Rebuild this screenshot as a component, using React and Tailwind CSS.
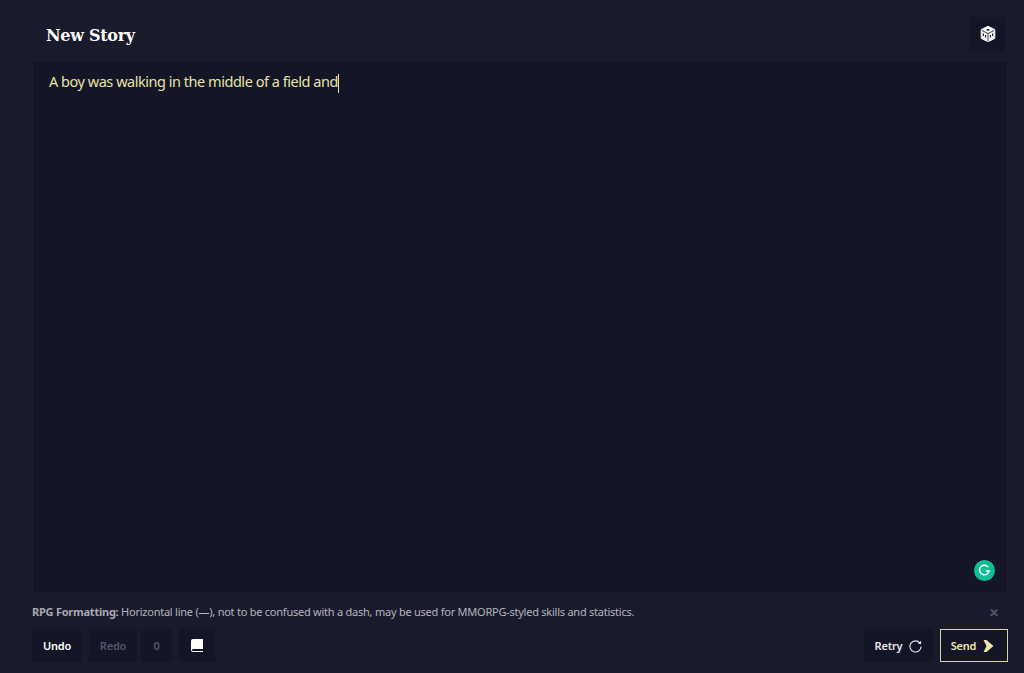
const sans = "font-['Noto_Sans',sans-serif]";

function DiceIcon() {
  return (
    <svg viewBox="0 0 16 16" className="w-[16px] h-[16px]">
      <path d="M8 .3l6.800 3.300v8.800L8 15.700l-6.800-3.300V3.600z" fill="#f4f4f6" stroke="#f4f4f6" strokeWidth="1" strokeLinejoin="round" />
      <path d="M2 4.500l6 3 6-3M8 7.500V15.500" stroke="#141526" strokeWidth=".8" fill="none" />
      <ellipse cx="8" cy="3.800" rx="1.600" ry=".9" fill="#141526" />
      <path d="M3.400 7.500v2.600M5.600 9v2.600M10.400 9v2.600M12.600 7.500v2.600" stroke="#141526" strokeWidth="1.100" />
    </svg>
  );
}

function BookIcon() {
  return (
    <svg viewBox="0 0 12 13" className="w-[12px] h-[13px]">
      <path d="M2 0h10v10H2a1 1 0 0 0-1 1v.2a1 1 0 0 0 1 .8h10v1H2a2 2 0 0 1-2-2V2a2 2 0 0 1 2-2z" fill="#ffffff" />
    </svg>
  );
}

function RetryIcon() {
  return (
    <svg viewBox="0 0 14 14" fill="none" className="w-[13px] h-[13px]">
      <path d="M11.800 3.300A6 6 0 1 0 13 7" stroke="#e8e8ec" strokeWidth="1.200" />
      <path d="M13 .8v3.400H9.600z" fill="#e8e8ec" />
    </svg>
  );
}

function SendIcon() {
  return (
    <svg viewBox="0 0 10 12" className="w-[11px] h-[12px]">
      <path d="M0 0h3l7 6-7 6H0l3-6z" fill="#ece6ac" />
    </svg>
  );
}

function GrammarlyBadge() {
  return (
    <div className="absolute right-[12px] bottom-[12px] w-[21px] h-[21px] rounded-full bg-[#0fbf92] flex items-center justify-center">
      <svg viewBox="0 0 14 14" fill="none" className="w-[13px] h-[13px]">
        <path d="M11 3.300A5.200 5.200 0 1 0 12 7.500H8.500" stroke="#ffffff" strokeWidth="1.500" />
      </svg>
    </div>
  );
}

const btn = "h-[33px] flex items-center justify-center bg-[#141526] text-[11px] font-semibold tracking-[-0.2px]";

export default function App() {
  return (
    <div className={`h-[673px] bg-[#191b2d] pl-[32px] pr-[16px] flex flex-col overflow-hidden ${sans}`}>
      <div className="h-[60px] flex items-center justify-between pl-[14px] pr-[3px] pt-[12px] pb-[4px] shrink-0">
        <h1 className="font-['DejaVu_Serif',serif] font-bold text-[16px] tracking-[-0.3px] text-white pt-[3px]">New Story</h1>
        <button className="w-[35px] h-[34px] flex items-center justify-center bg-[#141526]">
          <DiceIcon />
        </button>
      </div>

      <div className="relative h-[534px] bg-[#141526] border border-[#1c1e30] px-[16px] pt-[10px] pb-[12px] shrink-0">
        <p className="text-[14.500px] leading-[20px] tracking-[-0.47px] text-[#e8e3a8]">
          A boy was walking in the middle of a field and<span className="inline-block w-px h-[19px] bg-[#e8e3a8] align-middle"></span>
        </p>
        <GrammarlyBadge />
      </div>

      <div className="flex items-center justify-between h-[35px] pt-[2px] shrink-0">
        <p className="text-[11px] tracking-[-0.24px] text-[#b5b5bc]">
          <span className="font-bold text-[#a9a9b1]">RPG Formatting:</span> Horizontal line (—), not to be confused with a dash, may be used for MMORPG-styled skills and statistics.
        </p>
        <span className="text-[12px] font-bold text-[#55566a] leading-none mr-[9px]">✕</span>
      </div>

      <div className="flex items-center justify-between shrink-0">
        <div className="flex items-center">
          <button className={`${btn} w-[50px] text-white pt-[1px]`}>Undo</button>
          <button className={`${btn} w-[48px] ml-[7px] text-[#55566a] pt-[1px]`}>Redo</button>
          <button className={`${btn} w-[31px] ml-[4px] text-[#55566a] pt-[1px]`}>0</button>
          <button className={`${btn} w-[36px] ml-[7px]`}><BookIcon /></button>
        </div>
        <div className="flex items-center gap-[7px]">
          <button className={`${btn} w-[69px] gap-[7px] text-[#e8e8ec] pt-[1px]`}>Retry <RetryIcon /></button>
          <button className={`${btn} w-[68px] gap-[7px] pr-[3px] border border-[#d9d49c] text-[#ece6ac] pt-[1px]`}>Send <SendIcon /></button>
        </div>
      </div>
    </div>
  );
}
